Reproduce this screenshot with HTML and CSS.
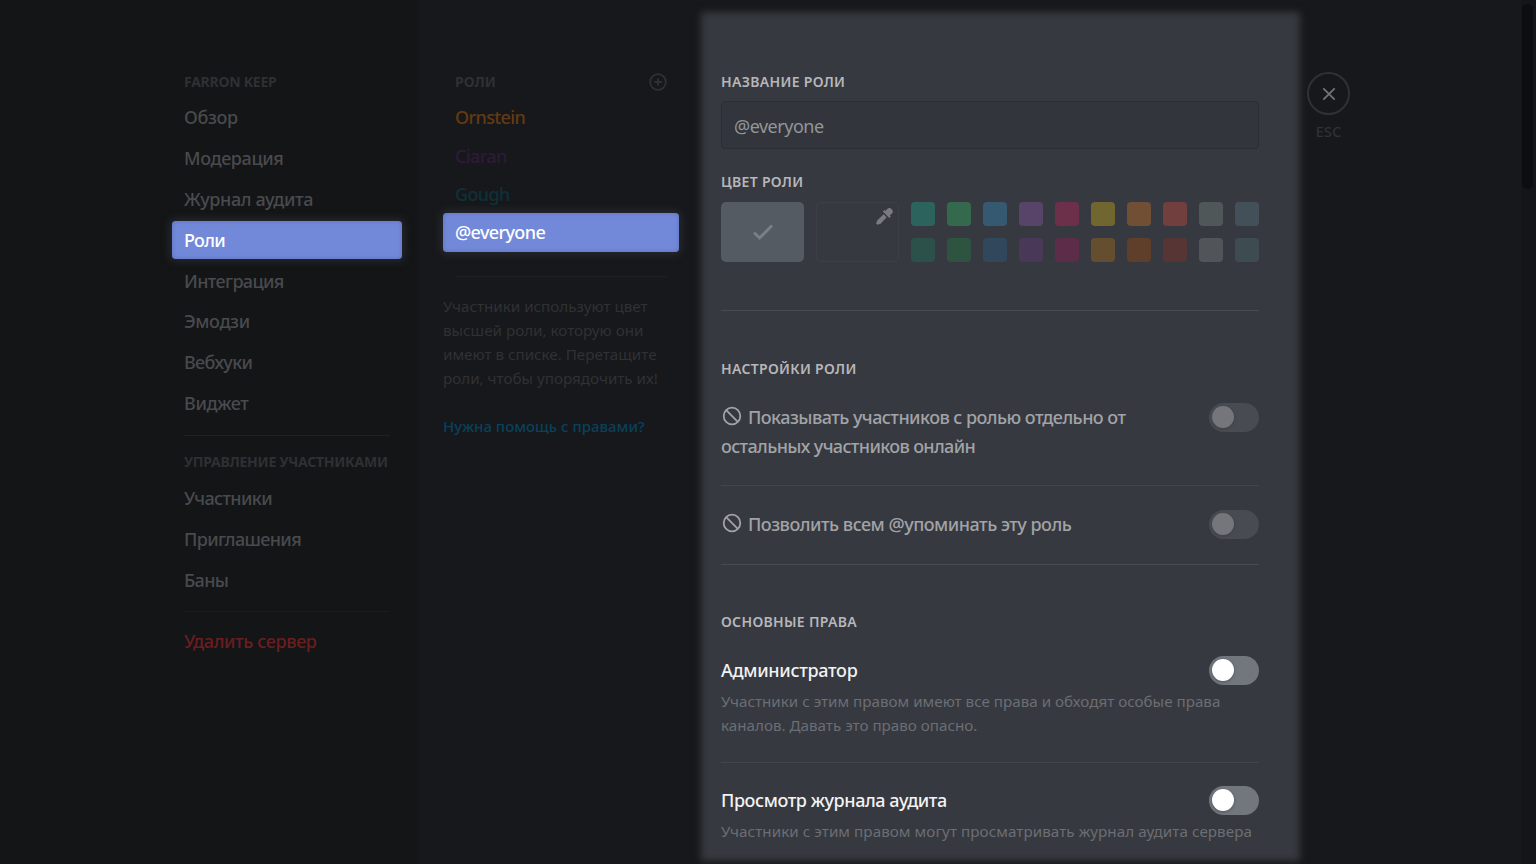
FILE: index.html
```html
<!DOCTYPE html>
<html lang="ru">
<head>
<meta charset="utf-8">
<title>Роли</title>
<link rel="stylesheet" href="styles.css">
</head>
<body>
<div class="app">
  <aside class="sidebar">
    <h2 class="caption">FARRON KEEP</h2>
    <nav class="nav">
      <a class="item">Обзор</a>
      <a class="item">Модерация</a>
      <a class="item">Журнал аудита</a>
      <a class="item selected">Роли</a>
      <a class="item tight">Интеграция</a>
      <a class="item">Эмодзи</a>
      <a class="item tight">Вебхуки</a>
      <a class="item">Виджет</a>
    </nav>
    <hr class="nav-line">
    <h2 class="caption members">УПРАВЛЕНИЕ УЧАСТНИКАМИ</h2>
    <nav class="nav">
      <a class="item tight">Участники</a>
      <a class="item tight">Приглашения</a>
      <a class="item tight">Баны</a>
    </nav>
    <hr class="nav-line faint">
    <a class="item danger">Удалить сервер</a>
  </aside>

  <section class="roles">
    <div class="roles-head">
      <h2 class="caption">РОЛИ</h2>
      <svg class="add" viewBox="0 0 18 18"><circle cx="9" cy="9" r="7.8"/><path d="M9 5.2v7.6M5.2 9h7.6"/></svg>
    </div>
    <a class="item role orange">Ornstein</a>
    <a class="item role purple">Ciaran</a>
    <a class="item role teal">Gough</a>
    <a class="item role selected">@everyone</a>
    <hr class="roles-line">
    <p class="hint">Участники используют цвет<br>высшей роли, которую они<br>имеют в списке. Перетащите<br>роли, чтобы упорядочить их!</p>
    <a class="help">Нужна помощь с правами?</a>
  </section>

  <main class="panel">
    <h3 class="label">НАЗВАНИЕ РОЛИ</h3>
    <div class="field">@everyone</div>
    <h3 class="label color-label">ЦВЕТ РОЛИ</h3>
    <div class="colors">
      <div class="big chosen"><svg viewBox="0 0 22 18"><path d="M2 9.5l5.6 5.5L20 2.5"/></svg></div>
      <div class="big custom"><svg viewBox="0 0 18 18"><path d="M16.6 1.3a3.4 3.4 0 0 0-4.9 0L9.9 3.2 8.9 2.2 7.3 3.8l6.8 6.8 1.6-1.6-1-1 1.9-1.8a3.4 3.4 0 0 0 0-4.9zM8.1 6.7L1.2 13.2.2 16.5l1.2 1.2 3.5-1L11.3 9.9z"/></svg></div>
      <div class="swatches">
        <i class="c1"></i><i class="c2"></i><i class="c3"></i><i class="c4"></i><i class="c5"></i><i class="c6"></i><i class="c7"></i><i class="c8"></i><i class="c9"></i><i class="c10"></i>
        <i class="d1"></i><i class="d2"></i><i class="d3"></i><i class="d4"></i><i class="d5"></i><i class="d6"></i><i class="d7"></i><i class="d8"></i><i class="d9"></i><i class="d10"></i>
      </div>
    </div>
    <hr class="line strong after-colors">
    <h3 class="label settings-label">НАСТРОЙКИ РОЛИ</h3>
    <div class="row muted">
      <div class="title"><svg class="ban" viewBox="0 0 20 20"><circle cx="10" cy="10" r="8.3"/><path d="M4.2 4.2l11.6 11.6"/></svg>Показывать участников с ролью отдельно от<br><span class="second">остальных участников онлайн</span></div>
      <span class="switch"></span>
    </div>
    <hr class="line after-show">
    <div class="row muted">
      <div class="title mention"><svg class="ban" viewBox="0 0 20 20"><circle cx="10" cy="10" r="8.3"/><path d="M4.2 4.2l11.6 11.6"/></svg>Позволить всем @упоминать эту роль</div>
      <span class="switch"></span>
    </div>
    <hr class="line strong after-mention">
    <h3 class="label main-label">ОСНОВНЫЕ ПРАВА</h3>
    <div class="row">
      <div class="title admin">Администратор</div>
      <span class="switch"></span>
    </div>
    <p class="note">Участники с этим правом имеют все права и обходят особые права<br>каналов. Давать это право опасно.</p>
    <hr class="line after-admin">
    <div class="row">
      <div class="title audit">Просмотр журнала аудита</div>
      <span class="switch"></span>
    </div>
    <p class="note wide">Участники с этим правом могут просматривать журнал аудита сервера</p>
  </main>

  <div class="close">
    <span class="ring"><svg viewBox="0 0 14 14"><path d="M1.3 1.3l11.4 11.4M12.7 1.3L1.3 12.7"/></svg></span>
    <span class="esc">ESC</span>
  </div>
  <div class="scroll"><div class="thumb"></div></div>
</div>
</body>
</html>
```
FILE: styles.css
```css
* { box-sizing: border-box; margin: 0; padding: 0; }
body {
  width: 1536px;
  height: 864px;
  overflow: hidden;
  background: #17181b;
  font-family: "Noto Sans", "Open Sans", sans-serif;
}
hr { border: 0; }
svg { display: block; fill: none; }
.app { display: flex; height: 864px; }

.sidebar {
  width: 418px;
  padding: 70px 16px 0 172px;
  background: #141517;
}
.caption {
  height: 24px;
  padding-left: 12px;
  line-height: 24px;
  font-size: 14px;
  font-weight: 700;
  color: #2e3033;
}
.sidebar .caption { margin-bottom: 4.4px; letter-spacing: -0.25px; }
.nav { display: flex; flex-direction: column; gap: 2.4px; }
.item {
  display: block;
  height: 38.4px;
  padding-left: 12px;
  border-radius: 4px;
  line-height: 38.4px;
  font-size: 18px;
  font-weight: 500;
  letter-spacing: -0.38px;
  color: #494a4d;
  white-space: nowrap;
}
.item.tight { letter-spacing: -0.65px; }
.item.selected {
  background: #7289da;
  color: #fff;
  box-shadow: 0 0 8px 2px #292b33, inset 0 0 4px #5d70b4;
}
.sidebar .item.selected { letter-spacing: -0.7px; }
.nav-line { height: 1px; margin: 12.6px 12px 14.4px; background: #202124; }
.sidebar .members { margin-bottom: 5px; }
.nav-line.faint { margin: 12px 12px 9.8px; background: #1b1c1e; }
.item.danger { color: #6b1e20; }

.roles { width: 282px; padding: 69.8px 21px 0 25px; background: #17181b; }
.roles-head {
  display: flex;
  justify-content: space-between;
  align-items: center;
  height: 24px;
  margin-bottom: 4.4px;
  padding-right: 12px;
}
.add { width: 18px; height: 18px; stroke: #2f3034; stroke-width: 1.8; }
.role { letter-spacing: -0.62px; }
.role.orange { color: #643a12; }
.role.purple { color: #2f1a38; }
.role.teal { color: #0e3038; }
.role.selected { color: #fff; }
.roles-line { height: 1px; margin: 24px 12px 17.2px; background: #202124; }
.hint { line-height: 24px; font-size: 15.2px; color: #2f3135; white-space: nowrap; }
.help {
  display: block;
  margin-top: 24px;
  line-height: 24px;
  font-size: 15px;
  font-weight: 500;
  color: #07425b;
  white-space: nowrap;
}

.panel {
  width: 585px;
  height: 835px;
  margin: 19px 7px 0 8px;
  padding: 51px 34px 0 13px;
  background: #36393f;
  box-shadow: 0 0 7px 7px #36393f;
}
.label {
  height: 24px;
  line-height: 24px;
  font-size: 14px;
  font-weight: 600;
  letter-spacing: 0.32px;
  color: #b6b7ba;
}
.field {
  height: 48.5px;
  margin: 6.7px 0 20.7px;
  padding-left: 12px;
  border: 1px solid #2c2e34;
  border-radius: 4px;
  background: #33353c;
  line-height: 48.5px;
  font-size: 18px;
  letter-spacing: -0.5px;
  color: #92959a;
}
.colors { display: flex; gap: 12px; margin-top: 7.7px; }
.big { display: flex; width: 83px; height: 60px; border-radius: 5px; }
.chosen { justify-content: center; align-items: center; background: #555b62; }
.chosen svg { width: 22px; height: 18px; stroke: #7b7e83; stroke-width: 3; }
.custom { justify-content: flex-end; padding: 5px; border: 1px solid #3d4046; }
.custom svg { width: 17px; height: 17px; fill: #797b80; }
.swatches { display: grid; grid-template-columns: repeat(10, 24px); gap: 12px; }
.swatches i { height: 24px; border-radius: 4px; }
.c1 { background: #2d635d; }
.c2 { background: #35694d; }
.c3 { background: #365972; }
.c4 { background: #574468; }
.c5 { background: #6d304b; }
.c6 { background: #716630; }
.c7 { background: #704f35; }
.c8 { background: #713f3d; }
.c9 { background: #505759; }
.c10 { background: #43505a; }
.d1 { background: #2c514b; }
.d2 { background: #2f5341; }
.d3 { background: #30475c; }
.d4 { background: #4a3858; }
.d5 { background: #5c2c48; }
.d6 { background: #654e2f; }
.d7 { background: #603f2a; }
.d8 { background: #573535; }
.d9 { background: #515459; }
.d10 { background: #3e4c52; }

.line { height: 1px; background: #42454b; }
.line.strong { height: 1.6px; background: #484b51; }
.after-colors { margin: 48px 0 46px; }
.row { display: flex; justify-content: space-between; height: 29px; }
.title {
  line-height: 29px;
  font-size: 18px;
  font-weight: 500;
  letter-spacing: -0.54px;
  color: #f2f2f3;
  white-space: nowrap;
}
.second { letter-spacing: -0.64px; }
.mention { letter-spacing: -0.5px; }
.admin { letter-spacing: -0.3px; }
.audit { letter-spacing: -0.42px; }
.muted .title { color: #a1a3a7; }
.ban {
  display: inline-block;
  width: 20px;
  height: 20px;
  margin: 0 6px 0 1px;
  vertical-align: -2px;
  stroke: #a1a3a7;
  stroke-width: 1.8;
}
.settings-label { margin-bottom: 22px; }
.after-show { margin: 53px 0 24px; }
.after-mention { margin: 24.5px 0 45px; }
.main-label { margin-bottom: 22px; }
.switch {
  width: 50px;
  height: 29px;
  padding: 3px;
  border-radius: 15px;
  background: #72767d;
}
.switch::before {
  content: "";
  display: block;
  width: 22px;
  height: 22px;
  border-radius: 50%;
  background: #fff;
  box-shadow: 0 1px 3px #50545a;
}
.muted .switch { background: #484b52; }
.muted .switch::before { background: #74767b; box-shadow: 0 1px 3px #3d4046; }
.note { margin-top: 4.2px; line-height: 24px; font-size: 15.2px; color: #6b6e74; white-space: nowrap; }
.note.wide { margin-top: 3.8px; letter-spacing: 0.06px; }
.after-admin { margin: 24.4px 0 23.6px; }

.close {
  display: flex;
  flex-direction: column;
  align-items: center;
  width: 43px;
  margin: 72px 171px 0 7px;
}
.ring {
  display: flex;
  justify-content: center;
  align-items: center;
  width: 43px;
  height: 43px;
  border: 2px solid #303134;
  border-radius: 50%;
}
.ring svg { width: 14px; height: 14px; stroke: #727376; stroke-width: 1.8; }
.esc { margin-top: 4px; line-height: 24px; font-size: 15px; font-weight: 500; color: #303134; }
.scroll { width: 15px; padding: 4px 3px 0 1px; background: #141518; }
.thumb { height: 185px; border-radius: 6px; background: #0c0d0f; }
```
